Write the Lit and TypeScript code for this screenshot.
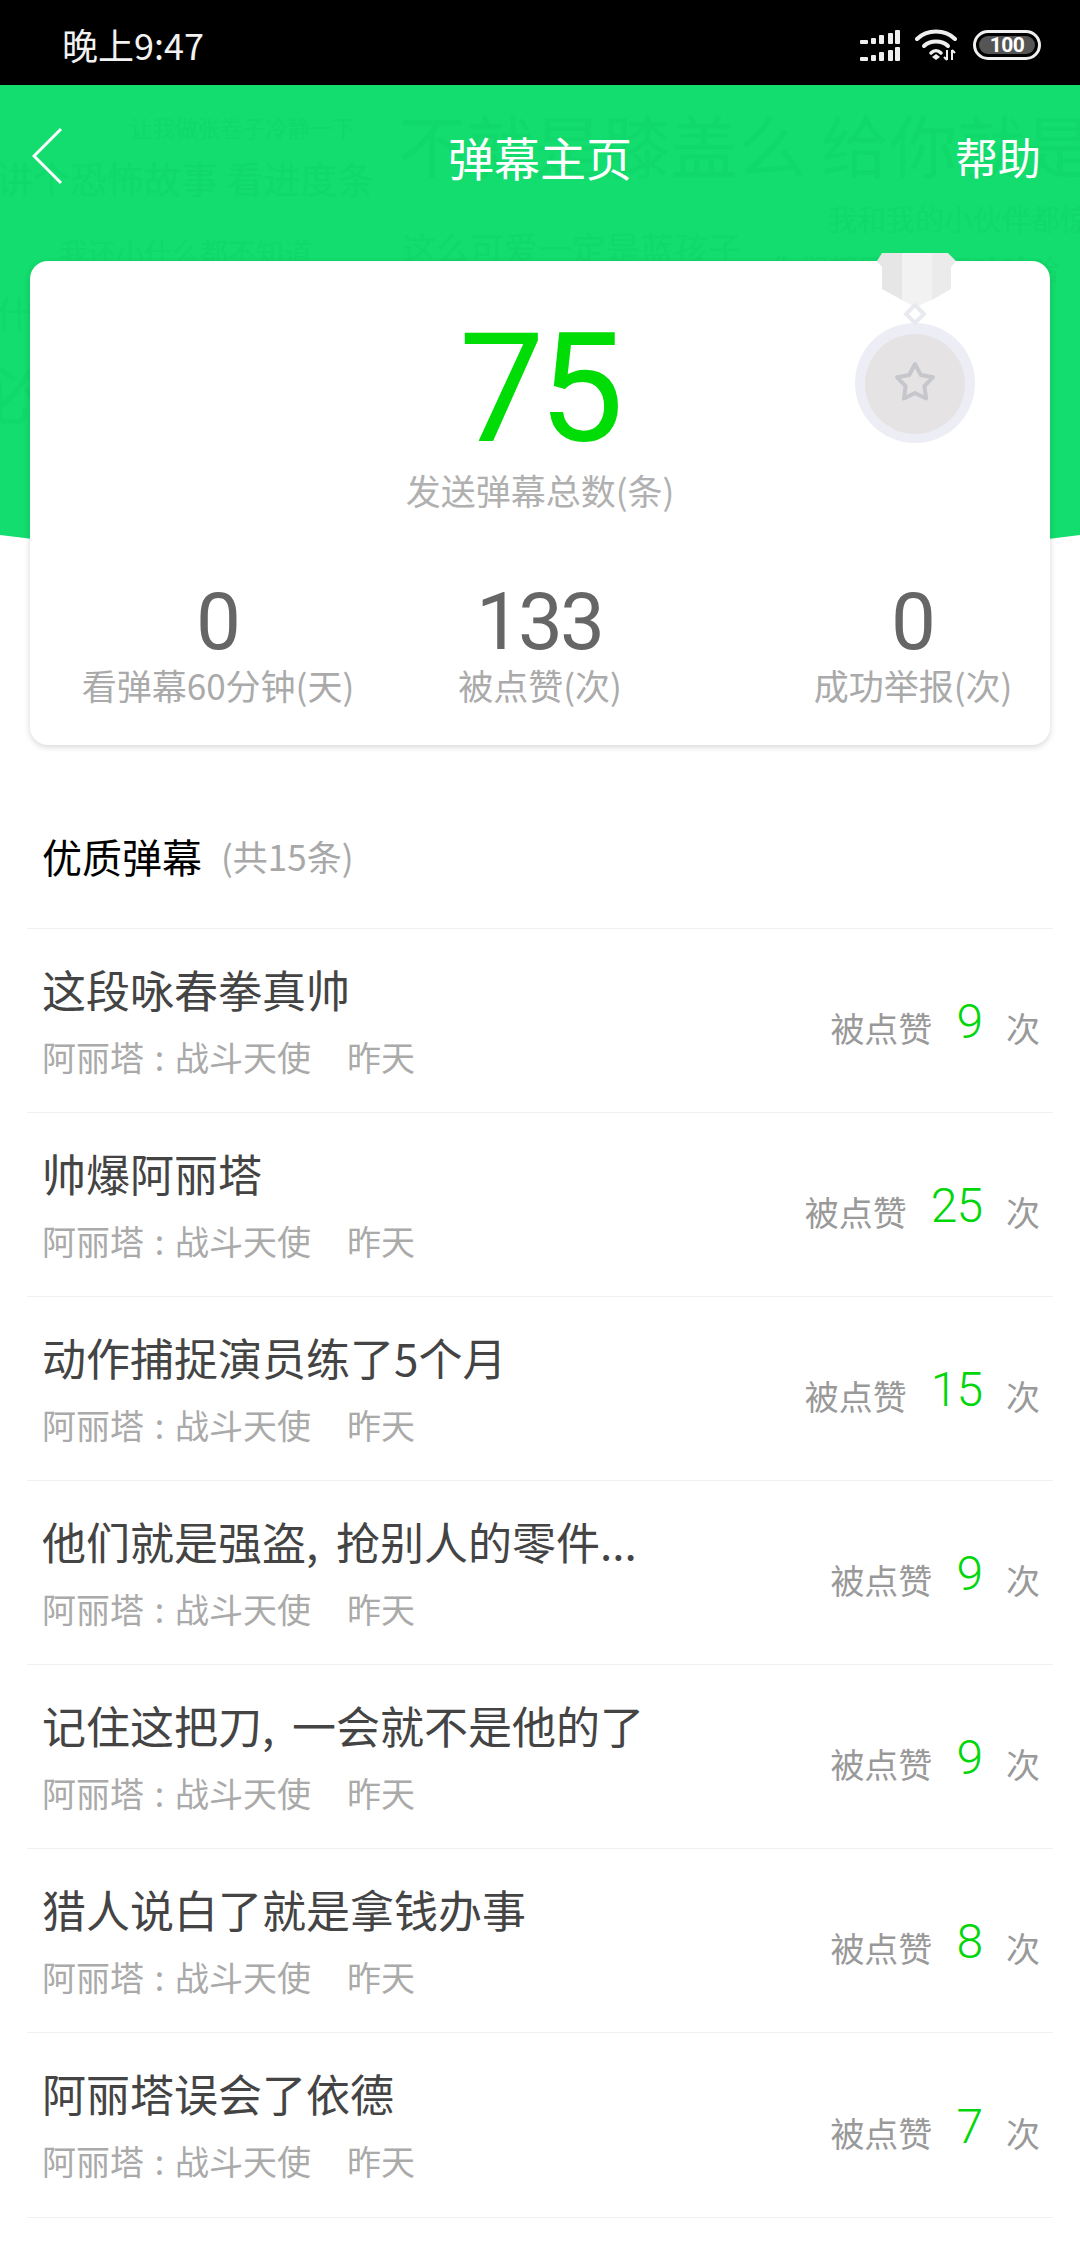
import { LitElement, html, css, svg } from "lit";
import { customElement } from "lit/decorators.js";

const BARRAGE: [string, number, number, number][] = [
  ["让我做张卷子冷静一下", 130, 127, 22.5],
  ["讲个恐怖故事 看进度条", -4, 178, 37],
  ["不就是膝盖么 给你就是", 398, 144, 68],
  ["我和我的小伙伴都惊呆了", 828, 218, 29],
  ["我还小什么都不知道", 60, 252, 28],
  ["这么可爱一定是蓝孩子", 402, 248, 34],
  ["你们都是魔鬼吗哈哈哈", 770, 268, 29],
  ["什", -4, 312, 36],
  ["必", -22, 392, 62],
];

const ROWS: [string, number][] = [
  ["这段咏春拳真帅", 9],
  ["帅爆阿丽塔", 25],
  ["动作捕捉演员练了5个月", 15],
  ["他们就是强盗, 抢别人的零件...", 9],
  ["记住这把刀, 一会就不是他的了", 9],
  ["猎人说白了就是拿钱办事", 8],
  ["阿丽塔误会了依德", 7],
];

@customElement("app-root")
export class AppRoot extends LitElement {
  static styles = css`
    :host {
      display: block;
      width: 1080px;
      height: 2244px;
      overflow: hidden;
      background: #fff;
      font-family: "Noto Sans CJK SC", "Noto Sans", sans-serif;
    }
    .status {
      height: 85px;
      background: #000;
      color: #f2f2f2;
      display: flex;
      align-items: center;
      justify-content: space-between;
      padding: 0 39px 0 62px;
      position: relative;
      z-index: 2;
    }
    .time {
      font-size: 36px;
      line-height: 1;
      margin-top: 2px;
    }
    .icons {
      display: flex;
      align-items: center;
      margin-top: 5px;
    }
    .signal { display: block; margin-right: 15px; }
    .wifi { display: block; margin-right: 14px; }
    .battery {
      width: 68px;
      height: 30px;
      box-sizing: border-box;
      border: 3px solid #efefef;
      border-radius: 15px;
      padding: 3px;
      display: flex;
    }
    .battery span {
      flex: 1;
      background: #555;
      border-radius: 9px;
      color: #fff;
      font: 700 21px/18px "Roboto", sans-serif;
      letter-spacing: -0.6px;
      text-align: center;
    }
    .hero {
      height: 176px;
      position: relative;
    }
    .hero-bg {
      position: absolute;
      left: 0;
      top: 0;
      width: 1080px;
      height: 480px;
      overflow: hidden;
      background: #12dd6e;
      clip-path: path("M0 0H1080V450Q540 520 0 450Z");
    }
    .bar {
      position: absolute;
      white-space: pre;
      line-height: 1;
      color: #11d86b;
      transform: translateY(-50%);
    }
    .nav {
      position: relative;
      height: 142px;
      display: grid;
      grid-template-columns: 1fr auto 1fr;
      align-items: center;
      padding: 0 39px;
      color: #fff;
    }
    .back { display: block; margin-left: -7px; }
    .title { font-size: 46px; line-height: 1; }
    .help { font-size: 43px; line-height: 1; justify-self: end; }
    .card {
      position: relative;
      height: 484px;
      margin: 0 30px;
      box-sizing: border-box;
      background: #fff;
      border-radius: 18px;
      box-shadow: 0 2px 6px rgba(0, 0, 0, 0.16);
      display: flex;
      flex-direction: column;
      align-items: center;
      padding-top: 46px;
    }
    .medal {
      position: absolute;
      left: 815px;
      top: -8px;
      display: block;
    }
    .total {
      font: 400 152px/164px "Roboto", sans-serif;
      color: #00dc05;
      letter-spacing: -6px;
      margin-right: 3px;
    }
    .total-label {
      font-size: 35px;
      line-height: 46px;
      color: #b0b0b0;
      margin-top: -4px;
    }
    .stats {
      align-self: stretch;
      display: grid;
      grid-template-columns: 376px 268px 1fr;
      margin-top: 66px;
      text-align: center;
    }
    .stat:last-child { margin-left: 102px; }
    .stat-num {
      font: 400 80px/86px "Roboto", sans-serif;
      color: #666;
      letter-spacing: -3px;
      padding-right: 2px;
    }
    .stat-label {
      font-size: 35px;
      line-height: 46px;
      color: #aaa;
      white-space: nowrap;
      margin-top: -3px;
    }
    .section {
      height: 183px;
      box-sizing: border-box;
      padding: 38px 0 0 42px;
      display: flex;
      align-items: center;
      gap: 19px;
    }
    .section b {
      font-size: 40px;
      font-weight: 400;
      color: #000;
      line-height: 1;
    }
    .section span {
      font-size: 35px;
      color: #a8a8a8;
      line-height: 1;
    }
    .rows { margin: 0 27px; }
    .row {
      height: 184px;
      box-sizing: border-box;
      border-top: 1px solid #f1f1f1;
      display: flex;
      align-items: center;
      justify-content: space-between;
      padding: 0 13px 0 15px;
    }
    .row:last-child { border-bottom: 1px solid #f1f1f1; box-sizing: content-box; }
    .row-main { margin-top: -2px; }
    .row-title {
      font-size: 44px;
      line-height: 58px;
      color: #444;
      word-spacing: 8px;
    }
    .row-meta {
      font-size: 34px;
      line-height: 46px;
      margin-top: 16px;
      color: #aaa;
      display: flex;
      gap: 36px;
    }
    .colon {
      display: inline-block;
      width: 31px;
      text-align: center;
    }
    .row-right {
      display: flex;
      align-items: baseline;
      gap: 24px;
      color: #999;
      font-size: 34px;
      line-height: 60px;
      margin-top: 13px;
    }
    .row-right em {
      font: 300 48px/60px "Roboto", sans-serif;
      font-style: normal;
      color: #00d60a;
      letter-spacing: -1px;
      transform: translateY(-4px);
    }
  `;

  render() {
    return html`
      <div class="status">
        <div class="time">晚上9:47</div>
        <div class="icons">
          ${this.signal()} ${this.wifi()}
          <div class="battery"><span>100</span></div>
        </div>
      </div>
      <div class="hero">
        <div class="hero-bg">
          ${BARRAGE.map(
            ([t, x, y, s]) =>
              html`<div class="bar" style="left:${x}px;top:${y - 85}px;font-size:${s}px">${t}</div>`
          )}
        </div>
        <div class="nav">
          <svg class="back" width="32" height="58" viewBox="0 0 32 58" fill="none" stroke="#fff" stroke-width="3">
            <path d="M29 2 2 29l27 27" />
          </svg>
          <div class="title">弹幕主页</div>
          <div class="help">帮助</div>
        </div>
      </div>
      <div class="card">
        ${this.medal()}
        <div class="total">75</div>
        <div class="total-label">发送弹幕总数(条)</div>
        <div class="stats">
          <div class="stat"><div class="stat-num">0</div><div class="stat-label">看弹幕60分钟(天)</div></div>
          <div class="stat"><div class="stat-num">133</div><div class="stat-label">被点赞(次)</div></div>
          <div class="stat"><div class="stat-num">0</div><div class="stat-label">成功举报(次)</div></div>
        </div>
      </div>
      <div class="section"><b>优质弹幕</b><span>(共15条)</span></div>
      <div class="rows">
        ${ROWS.map(
          ([t, n]) => html`
            <div class="row">
              <div class="row-main">
                <div class="row-title">${t}</div>
                <div class="row-meta"><span>阿丽塔<span class="colon">:</span>战斗天使</span><span>昨天</span></div>
              </div>
              <div class="row-right"><span>被点赞</span><em>${n}</em><span>次</span></div>
            </div>
          `
        )}
      </div>
    `;
  }

  signal() {
    const bars = [0, 1, 2, 3, 4].map((i) => {
      const h = [4, 6, 9, 11, 14][i];
      const x = [0, 11, 19, 28, 35][i];
      const w = i === 0 ? 8 : 5;
      return svg`<rect x=${x} y=${14 - h} width=${w} height=${h} rx="1"/>
        <rect x=${x} y=${31 - h} width=${w} height=${h} rx="1"/>`;
    });
    return html`<svg class="signal" width="40" height="31" viewBox="0 0 40 31" fill="#efefef">${bars}</svg>`;
  }

  wifi() {
    return html`<svg class="wifi" width="44" height="32" viewBox="0 0 44 32" fill="none" stroke="#efefef" stroke-width="4">
      <path d="M2 10C12 0 30 0 40 10" stroke-linecap="round" />
      <path d="M9 17C15 11 27 11 33 17" stroke-linecap="round" />
      <path d="M16 24c3-3 7-3 10 0" stroke-width="3.5" stroke-linecap="round" />
      <path d="M21 25l4 3-4 3-4-3z" fill="#efefef" stroke="none" />
      <path d="M32 21v10M32 31l-3-3M37 21v10M37 21l3 3" stroke-width="2" />
    </svg>`;
  }

  medal() {
    return html`<svg class="medal" width="140" height="200" viewBox="0 0 140 200">
      <path d="M37 0H57V47L37 36V14L32 8Z" fill="#e6e6e6" />
      <path d="M87 0H103L111 8 106 14V36L87 47Z" fill="#ebebeb" />
      <path d="M57 0H87V47L70 54 57 47Z" fill="#f3f2f3" />
      <circle cx="70" cy="130" r="60" fill="#edeef5" />
      <circle cx="70" cy="131" r="50" fill="#e6e3e5" />
      <path d="M70 52l9 9-9 9-9-9z" fill="#fff" stroke="#e9eaf0" stroke-width="4" />
      <path
        d="M70 111l5.800 11 12.200 2.200-8.600 9 1.700 12.300-11.100-5.500-11.100 5.500 1.700-12.300-8.600-9 12.200-2.200z"
        fill="none"
        stroke="#c6c7cb"
        stroke-width="4"
        stroke-linejoin="round"
      />
    </svg>`;
  }
}
